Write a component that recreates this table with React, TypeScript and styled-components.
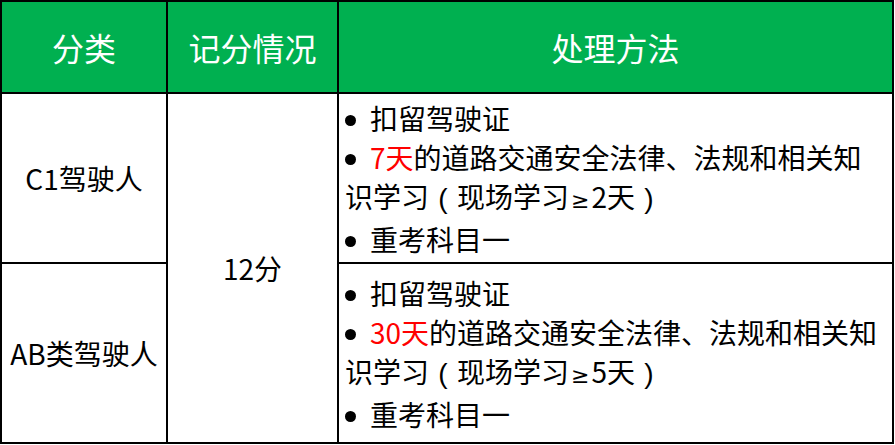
import styled, { createGlobalStyle } from 'styled-components';

const GlobalStyle = createGlobalStyle`
  html, body {
    margin: 0;
    padding: 0;
    background: #ffffff;
  }
  body {
    font-family: "Noto Sans CJK SC", "Microsoft YaHei", "Liberation Sans", sans-serif;
    color: #000000;
  }
`;

const Table = styled.table`
  width: 894px;
  border-collapse: collapse;
  table-layout: fixed;
`;

const HeadRow = styled.tr`
  height: 92px;
`;

const BodyRow = styled.tr<{ $height: number }>`
  height: ${p => p.$height}px;
`;

const HeadCell = styled.th<{ $width?: number }>`
  width: ${p => (p.$width ? `${p.$width}px` : 'auto')};
  background-color: #00b050;
  color: #ffffff;
  font-size: 32px;
  font-weight: 400;
  text-align: center;
  vertical-align: middle;
  border: 2px solid #000000;
  padding: 0;
`;

const Cell = styled.td`
  border: 2px solid #000000;
  font-size: 28px;
  text-align: center;
  vertical-align: middle;
  padding: 0;
`;

const MethodCell = styled(Cell)`
  text-align: left;
  padding: 2px 6px 0;
  line-height: 39px;
`;

const Bullet = styled.span`
  display: inline-block;
  width: 11px;
  height: 11px;
  border-radius: 50%;
  background-color: #000000;
  margin-right: 14px;
  vertical-align: middle;
  position: relative;
  top: -2px;
`;

const Highlight = styled.span`
  color: #ff0000;
`;

const Paren = styled.span`
  display: inline-block;
  width: 28px;
  text-align: center;
  font-family: "Liberation Sans", sans-serif;
`;

const Sign = styled.span`
  font-family: "DejaVu Sans", sans-serif;
  font-size: 22px;
  padding: 0 2px;
`;

interface Rule {
  driver: string;
  days: string;
  onSite: string;
  height: number;
}

const rules: Rule[] = [
  { driver: 'C1驾驶人', days: '7天', onSite: '2天', height: 170 },
  { driver: 'AB类驾驶人', days: '30天', onSite: '5天', height: 180 },
];

export default function App() {
  return (
    <>
      <GlobalStyle />
      <Table>
        <thead>
          <HeadRow>
            <HeadCell $width={164}>分类</HeadCell>
            <HeadCell $width={169}>记分情况</HeadCell>
            <HeadCell>处理方法</HeadCell>
          </HeadRow>
        </thead>
        <tbody>
          {rules.map((rule, i) => (
            <BodyRow key={rule.driver} $height={rule.height}>
              <Cell>{rule.driver}</Cell>
              {i === 0 && <Cell rowSpan={rules.length}>12分</Cell>}
              <MethodCell>
                <Bullet />扣留驾驶证
                <br />
                <Bullet />
                <Highlight>{rule.days}</Highlight>的道路交通安全法律、法规和相关知
                <br />
                识学习<Paren>(</Paren>现场学习<Sign>≥</Sign>{rule.onSite}<Paren>)</Paren>
                <br />
                <Bullet />重考科目一
              </MethodCell>
            </BodyRow>
          ))}
        </tbody>
      </Table>
    </>
  );
}
